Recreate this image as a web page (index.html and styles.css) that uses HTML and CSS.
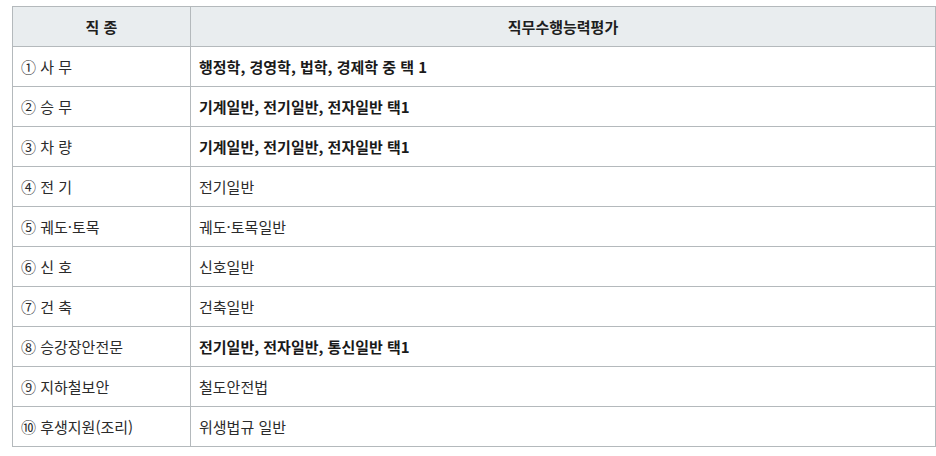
FILE: index.html
```html
<!DOCTYPE html>
<html lang="ko">
<head>
<meta charset="utf-8">
<link rel="stylesheet" href="styles.css">
</head>
<body>
<table class="jobs">
  <thead>
    <tr><th class="c1">직 종</th><th>직무수행능력평가</th></tr>
  </thead>
  <tbody>
    <tr><td>① 사 무</td><td class="b">행정학, 경영학, 법학, 경제학 중 택 1</td></tr>
    <tr><td>② 승 무</td><td class="b">기계일반, 전기일반, 전자일반 택1</td></tr>
    <tr><td>③ 차 량</td><td class="b">기계일반, 전기일반, 전자일반 택1</td></tr>
    <tr><td>④ 전 기</td><td>전기일반</td></tr>
    <tr><td>⑤ 궤도·토목</td><td>궤도·토목일반</td></tr>
    <tr><td>⑥ 신 호</td><td>신호일반</td></tr>
    <tr><td>⑦ 건 축</td><td>건축일반</td></tr>
    <tr><td>⑧ 승강장안전문</td><td class="b">전기일반, 전자일반, 통신일반 택1</td></tr>
    <tr><td>⑨ 지하철보안</td><td>철도안전법</td></tr>
    <tr><td>⑩ 후생지원(조리)</td><td>위생법규 일반</td></tr>
  </tbody>
</table>
</body>
</html>
```

FILE: styles.css
```css
html, body {
  margin: 0;
  padding: 0;
  background: #fff;
}
body {
  padding: 6px 0 0 12px;
  font-family: "Noto Sans CJK KR", "Noto Sans", sans-serif;
  color: #222;
}
.jobs {
  border-collapse: collapse;
  width: 924px;
  table-layout: fixed;
  font-size: 15px;
}
.jobs th, .jobs td {
  border: 1px solid #b4b9bc;
  height: 40px;
  padding: 0 0 0 8px;
  box-sizing: border-box;
  vertical-align: middle;
  line-height: 20px;
}
.jobs th {
  background: #e9edef;
  font-weight: 700;
  text-align: center;
  padding: 0;
  color: #1e1e1e;
}
.jobs .c1 {
  width: 178px;
}
.jobs td {
  color: #2b2b2b;
}
.jobs td.b {
  font-weight: 700;
  color: #1a1a1a;
}
```
